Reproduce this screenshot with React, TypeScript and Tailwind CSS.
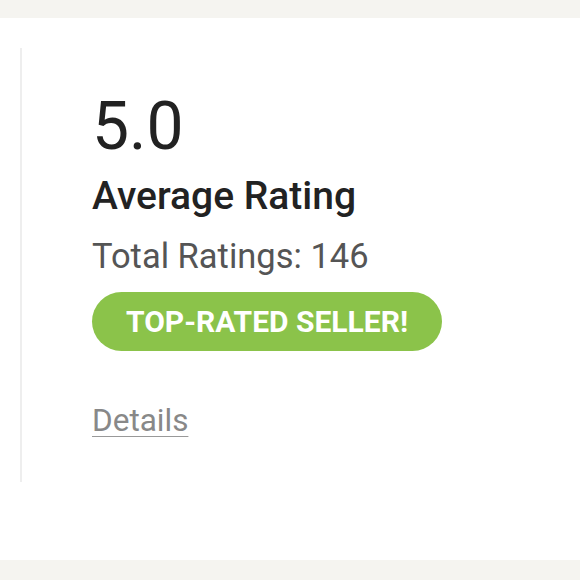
export default function App() {
  return (
    <div className="h-[580px] w-[580px] flex flex-col bg-white font-['Roboto',sans-serif]">
      <div className="h-[18px] shrink-0 bg-[#f5f4f0]" />
      <main className="flex-1 pt-[30px] pl-5">
        <section className="h-[434px] border-l-2 border-[#eeeeee] pl-[70px] pt-[46px] flex flex-col items-start">
          <div className="text-[66px] leading-none text-[#222222]">5.0</div>
          <h2 className="mt-[17px] text-[39px] leading-none font-medium text-[#222222]">
            Average Rating
          </h2>
          <p className="mt-[23px] text-[34.5px] leading-none text-[#555555]">Total Ratings: 146</p>
          <span className="mt-[18px] h-[59px] w-[350px] rounded-full bg-[#8bc34a] flex items-center justify-center text-[30px] font-bold text-white">
            TOP-RATED SELLER!
          </span>
          <a
            href="#"
            className="mt-[54px] text-[31.5px] leading-none text-[#888888] underline decoration-1 decoration-[#999999] underline-offset-[5px]"
          >
            Details
          </a>
        </section>
      </main>
      <div className="h-[20px] shrink-0 bg-[#f5f4f0]" />
    </div>
  );
}
